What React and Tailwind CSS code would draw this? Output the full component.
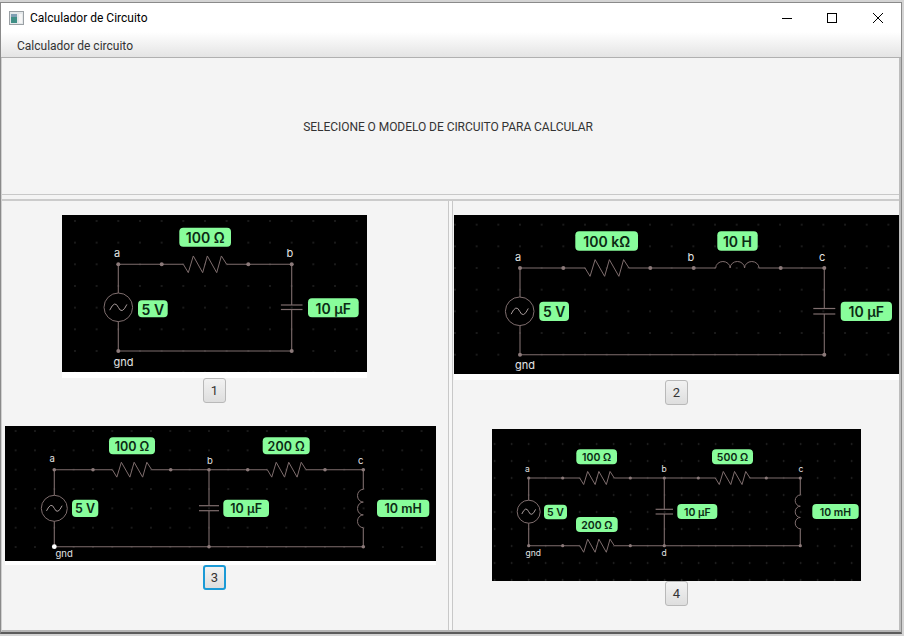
import React from 'react';

const WIRE = '#7f6e6e';

// zigzag resistor between x1 and x2 on a horizontal wire
const Resistor = ({ x1, x2, y, g }) => {
  const w = x2 - x1;
  const a = g * 0.385;
  const pts = [[0, 0], [0.115, a], [0.23, -a], [0.446, a], [0.554, -a], [0.77, a], [0.877, -a], [1, 0]];
  return (
    <polyline
      points={pts.map(([f, dy]) => `${x1 + f * w},${y + dy}`).join(' ')}
      fill="none"
      stroke={WIRE}
      strokeWidth="1"
    />
  );
};

const Inductor = ({ x1, x2, y, g }) => {
  const s = (x2 - x1) / 3;
  const r = g * 0.3;
  return (
    <path
      d={`M${x1} ${y} a${s / 2} ${r} 0 0 1 ${s} 0 a${s / 2} ${r} 0 0 1 ${s} 0 a${s / 2} ${r} 0 0 1 ${s} 0`}
      fill="none"
      stroke={WIRE}
      strokeWidth="1"
    />
  );
};

const InductorV = ({ x, y1, y2, g }) => {
  const s = (y2 - y1) / 3;
  const r = g * 0.3;
  return (
    <path
      d={`M${x} ${y1} a${r} ${s / 2} 0 0 0 0 ${s} a${r} ${s / 2} 0 0 0 0 ${s} a${r} ${s / 2} 0 0 0 0 ${s}`}
      fill="none"
      stroke={WIRE}
      strokeWidth="1"
    />
  );
};

const Capacitor = ({ x, y1, y2, w }) => (
  <g stroke={WIRE} strokeWidth="1.2">
    <line x1={x - w} x2={x + w} y1={y1} y2={y1} />
    <line x1={x - w} x2={x + w} y1={y2} y2={y2} />
  </g>
);

const Source = ({ cx, cy, r }) => (
  <g fill="none" stroke={WIRE} strokeWidth="1">
    <circle cx={cx} cy={cy} r={r} fill="#000" />
    <path
      d={`M${cx - 0.6 * r} ${cy + 0.2 * r} Q${cx - 0.25 * r} ${cy - 0.55 * r} ${cx} ${cy} T${cx + 0.6 * r} ${cy - 0.2 * r}`}
      stroke="#a89c9c"
    />
  </g>
);

const Pill = ({ x1, x2, y1, y2, size, children }) => (
  <g>
    <rect x={x1} y={y1} width={x2 - x1} height={y2 - y1} rx="4" fill="#88fd9b" />
    <text
      x={(x1 + x2) / 2}
      y={(y1 + y2) / 2 + 0.5}
      textAnchor="middle"
      dominantBaseline="central"
      fontSize={size}
      className="font-['Inter'] font-semibold"
      fill="#0b2a14"
    >
      {children}
    </text>
  </g>
);

const Node = ({ x, y, size, children }) => (
  <text
    x={x}
    y={y}
    dominantBaseline="central"
    fontSize={size}
    className="font-['Inter']"
    fill="#e4e4e4"
  >
    {children}
  </text>
);

const Wires = ({ lines }) => (
  <g stroke={WIRE} strokeWidth="1.1">
    {lines.map(([x1, y1, x2, y2], i) => (
      <line key={i} x1={x1} y1={y1} x2={x2} y2={y2} />
    ))}
  </g>
);

const Dots = ({ pts, r }) => (
  <g fill="#8c7a7a">
    {pts.map(([x, y], i) => (
      <circle key={i} cx={x} cy={y} r={r} />
    ))}
  </g>
);

// black board with the faint dot grid, the parts go in as children
const Board = ({ id, width, height, g, ax, ay, children }) => (
  <svg width={width} height={height} className="block">
    <defs>
      <pattern id={id} x={ax - g / 2} y={ay - g / 2} width={g} height={g} patternUnits="userSpaceOnUse">
        <circle cx={g / 2} cy={g / 2} r="0.8" fill="#3a3a3a" />
      </pattern>
    </defs>
    <rect width={width} height={height} fill="#000" />
    <rect width={width} height={height} fill={`url(#${id})`} />
    {children}
  </svg>
);

const CircuitOne = () => (
  <Board id="grid1" width={305} height={157} g={21.67} ax={56.3} ay={49.3}>
    <Wires lines={[[56.3, 49.3, 121.3, 49.3], [164.7, 49.3, 229.7, 49.3], [56.3, 49.3, 56.3, 136], [56.3, 136, 229.7, 136], [229.7, 49.3, 229.7, 90], [229.7, 94.5, 229.7, 136]]} />
    <Resistor x1={121.3} x2={164.7} y={49.3} g={21.67} />
    <Capacitor x={229.7} y1={90} y2={94.5} w={10.8} />
    <Source cx={56.3} cy={92.3} r={14.3} />
    <Dots r={2} pts={[[56.3, 49.3], [99.7, 49.3], [186.3, 49.3], [229.7, 49.3], [56.3, 136], [229.7, 136]]} />
    <Pill x1={117.3} x2={169} y1={12.7} y2={31.7} size={14}>100 Ω</Pill>
    <Pill x1={76} x2={105.7} y1={85.3} y2={102.3} size={14}>5 V</Pill>
    <Pill x1={246} x2={296.7} y1={83.3} y2={102.3} size={14}>10 µF</Pill>
    <Node x={52} y={38.3} size={11}>a</Node>
    <Node x={224.5} y={38.3} size={11}>b</Node>
    <Node x={51.5} y={147.3} size={11}>gnd</Node>
  </Board>
);

const CircuitTwo = () => (
  <Board id="grid2" width={445} height={159} g={21.67} ax={66} ay={53}>
    <Wires lines={[[66, 53, 131, 53], [175, 53, 261.7, 53], [305, 53, 370.3, 53], [66, 53, 66, 139.7], [66, 139.7, 370.3, 139.7], [370.3, 53, 370.3, 93.3], [370.3, 99, 370.3, 139.7]]} />
    <Resistor x1={131} x2={175} y={53} g={21.67} />
    <Inductor x1={261.7} x2={305} y={53} g={21.67} />
    <Capacitor x={370.3} y1={93.5} y2={99} w={11} />
    <Source cx={65.7} cy={96.3} r={14.3} />
    <Dots r={2} pts={[[66, 53], [109.3, 53], [196.3, 53], [239.7, 53], [326.7, 53], [370.3, 53], [66, 139.7], [370.3, 139.7]]} />
    <Pill x1={121.3} x2={184} y1={16.3} y2={35.7} size={14}>100 kΩ</Pill>
    <Pill x1={263.3} x2={303.7} y1={16.3} y2={35.7} size={14}>10 H</Pill>
    <Pill x1={85.3} x2={115} y1={86.7} y2={106} size={14}>5 V</Pill>
    <Pill x1={386.7} x2={438} y1={86.7} y2={106} size={14}>10 µF</Pill>
    <Node x={61} y={41.7} size={11}>a</Node>
    <Node x={233.5} y={41.7} size={11}>b</Node>
    <Node x={365} y={41.7} size={11}>c</Node>
    <Node x={61} y={150.3} size={11}>gnd</Node>
  </Board>
);

const CircuitThree = () => (
  <Board id="grid3" width={431} height={135} g={19.33} ax={49.3} ay={43.7}>
    <Wires lines={[[49.3, 43.7, 107.3, 43.7], [146.7, 43.7, 262.3, 43.7], [301, 43.7, 358.3, 43.7], [49.3, 43.7, 49.3, 120.7], [49.3, 120.7, 358.3, 120.7], [204, 43.7, 204, 79.7], [204, 84.7, 204, 120.7], [358.3, 43.7, 358.3, 63.3], [358.3, 101.7, 358.3, 120.7]]} />
    <Resistor x1={107.3} x2={146.7} y={43.7} g={19.33} />
    <Resistor x1={262.3} x2={301} y={43.7} g={19.33} />
    <InductorV x={358.3} y1={63.3} y2={101.7} g={19.33} />
    <Capacitor x={204} y1={79.7} y2={84.7} w={10} />
    <Source cx={49.3} cy={82.3} r={13} />
    <Dots r={1.8} pts={[[49.3, 43.7], [88, 43.7], [165.7, 43.7], [204, 43.7], [242.7, 43.7], [320, 43.7], [358.3, 43.7], [204, 120.7], [358.3, 120.7]]} />
    <circle cx={49.3} cy={120.7} r={2.4} fill="#fff" />
    <Pill x1={104} x2={150} y1={11.3} y2={28.3} size={12.5}>100 Ω</Pill>
    <Pill x1={257.7} x2={304.7} y1={11.3} y2={28.3} size={12.5}>200 Ω</Pill>
    <Pill x1={67} x2={93.3} y1={73.7} y2={91} size={12.5}>5 V</Pill>
    <Pill x1={218.3} x2={264} y1={73.7} y2={91} size={12.5}>10 µF</Pill>
    <Pill x1={372} x2={424.3} y1={73.7} y2={91} size={12.5}>10 mH</Pill>
    <Node x={44.5} y={32.3} size={9.5}>a</Node>
    <Node x={202} y={34.3} size={9.5}>b</Node>
    <Node x={353} y={34.3} size={9.5}>c</Node>
    <Node x={50.5} y={127.3} size={9.5}>gnd</Node>
  </Board>
);

const CircuitFour = () => (
  <Board id="grid4" width={369} height={152} g={17} ax={36.7} ay={49}>
    <Wires lines={[[36.7, 49, 87.7, 49], [122.3, 49, 223.3, 49], [258, 49, 308.3, 49], [36.7, 49, 36.7, 116.7], [36.7, 116.7, 87.7, 116.7], [122.3, 116.7, 308.3, 116.7], [172.3, 49, 172.3, 80.3], [172.3, 85, 172.3, 116.7], [308.3, 49, 308.3, 66], [308.3, 99.7, 308.3, 116.7]]} />
    <Resistor x1={87.7} x2={122.3} y={49} g={17} />
    <Resistor x1={223.3} x2={258} y={49} g={17} />
    <Resistor x1={87.7} x2={122.3} y={116.7} g={17} />
    <InductorV x={308.3} y1={66} y2={99.7} g={17} />
    <Capacitor x={172.3} y1={80.3} y2={85} w={8.7} />
    <Source cx={36.7} cy={82.7} r={11.5} />
    <Dots r={1.6} pts={[[36.7, 49], [70.7, 49], [138.3, 49], [172.3, 49], [206.3, 49], [274.3, 49], [308.3, 49], [36.7, 116.7], [70.7, 116.7], [138.3, 116.7], [172.3, 116.7], [308.3, 116.7]]} />
    <Pill x1={84.3} x2={125} y1={20.3} y2={35.3} size={10.5}>100 Ω</Pill>
    <Pill x1={220} x2={261} y1={20.3} y2={35.3} size={10.5}>500 Ω</Pill>
    <Pill x1={52} x2={75} y1={75.7} y2={90.3} size={10.5}>5 V</Pill>
    <Pill x1={84} x2={125.7} y1={88} y2={103} size={10.5}>200 Ω</Pill>
    <Pill x1={185.3} x2={225.3} y1={75} y2={90} size={10.5}>10 µF</Pill>
    <Pill x1={320.3} x2={366.7} y1={75} y2={90} size={10.5}>10 mH</Pill>
    <Node x={33} y={40} size={8.5}>a</Node>
    <Node x={169.5} y={40} size={8.5}>b</Node>
    <Node x={306.5} y={40} size={8.5}>c</Node>
    <Node x={33.5} y={124.3} size={8.5}>gnd</Node>
    <Node x={169.5} y={124.3} size={8.5}>d</Node>
  </Board>
);

const ModelButton = ({ className, children }) => (
  <button className={`w-[23px] h-[25px] rounded-[3px] bg-linear-to-b from-[#f2f2f2] to-[#dedede] text-[13px] text-[#333] flex items-center justify-center ${className}`}>
    {children}
  </button>
);

const App = () => {
  return (
    <div className="w-[904px] h-[636px] bg-[#d4d4d4] pt-[2px] overflow-hidden font-['Roboto',sans-serif] text-[12px]">
      <div className="w-[902px] h-[632px] flex flex-col bg-white border-t border-x border-b-2 border-t-[#8a8a8a] border-x-[#8a8a8a] border-b-[#5c5c5c]">
        {/* Title bar */}
        <div className="h-[29px] shrink-0 flex items-center bg-white pl-[8px]">
          <svg width="15" height="14" viewBox="0 0 15 14" className="shrink-0">
            <rect x="0.5" y="0.5" width="14" height="13" fill="#e4e8ea" stroke="#9aa0a4" />
            <rect x="2" y="3" width="6" height="9" fill="#3f8f86" />
            <rect x="2" y="3" width="6" height="3" fill="#7f9fb4" />
            <rect x="10" y="3" width="3" height="9" fill="#f6f6f6" />
          </svg>
          <span className="ml-[6px] text-black">Calculador de Circuito</span>
          <div className="ml-auto flex items-center">
            <svg width="10" height="10" viewBox="0 0 10 10" className="mr-[35px]">
              <line x1="0" x2="10" y1="5.5" y2="5.5" stroke="#000" />
            </svg>
            <svg width="10" height="10" viewBox="0 0 10 10" className="mr-[36px]">
              <rect x="0.5" y="0.5" width="9" height="9" fill="none" stroke="#000" />
            </svg>
            <svg width="10" height="10" viewBox="0 0 10 10" className="mr-[18px]">
              <path d="M0 0L10 10M10 0L0 10" stroke="#000" />
            </svg>
          </div>
        </div>

        {/* Menu */}
        <div className="h-[26px] shrink-0 flex items-center pl-[16px] pt-[3px] bg-linear-to-b from-white to-[#e4e4e4] border-b border-[#b0b0b0] text-[#333]">
          Calculador de circuito
        </div>

        {/* Content */}
        <div className="flex-1 min-h-0 flex flex-col bg-[#f4f4f4] border-l border-r-2 border-b-2 border-l-[#d0d0d0] border-r-[#bdbdbd] border-b-[#b5b5b5]">
          <div className="h-[137px] shrink-0 flex items-center justify-center border-b border-[#c8c8c8] text-[#333] pt-[2px] pr-[5px] tracking-[-0.05px]">
            SELECIONE O MODELO DE CIRCUITO PARA CALCULAR
          </div>
          <div className="h-[4px] shrink-0" />
          <div className="h-[2px] shrink-0 bg-[#cbcbcb]" />

          <div className="flex-1 min-h-0 flex">
            <div className="w-[446px] shrink-0 flex flex-col items-start pt-[14px]">
              <div className="ml-[60px] w-[305px] h-[163px] bg-white">
                <CircuitOne />
              </div>
              <ModelButton className="ml-[201px] border border-[#b9b9b9]">1</ModelButton>
              <div className="ml-[3px] mt-[23px] w-[431px] h-[139px] bg-white">
                <CircuitThree />
              </div>
              <ModelButton className="ml-[201px] border-2 border-[#1a9ad6]">3</ModelButton>
            </div>

            <div className="w-[5px] shrink-0 border-x border-[#c8c8c8] bg-[#f7f7f7]" />

            <div className="flex-1 flex flex-col items-start pt-[14px]">
              <div className="w-[445px] h-[165px] bg-white ml-[1px]">
                <CircuitTwo />
              </div>
              <ModelButton className="ml-[212px] border border-[#b9b9b9]">2</ModelButton>
              <div className="ml-[39px] mt-[24px] w-[369px] h-[152px]">
                <CircuitFour />
              </div>
              <ModelButton className="ml-[212px] border border-[#b9b9b9]">4</ModelButton>
            </div>
          </div>
        </div>
      </div>
    </div>
  );
};

export default App;
